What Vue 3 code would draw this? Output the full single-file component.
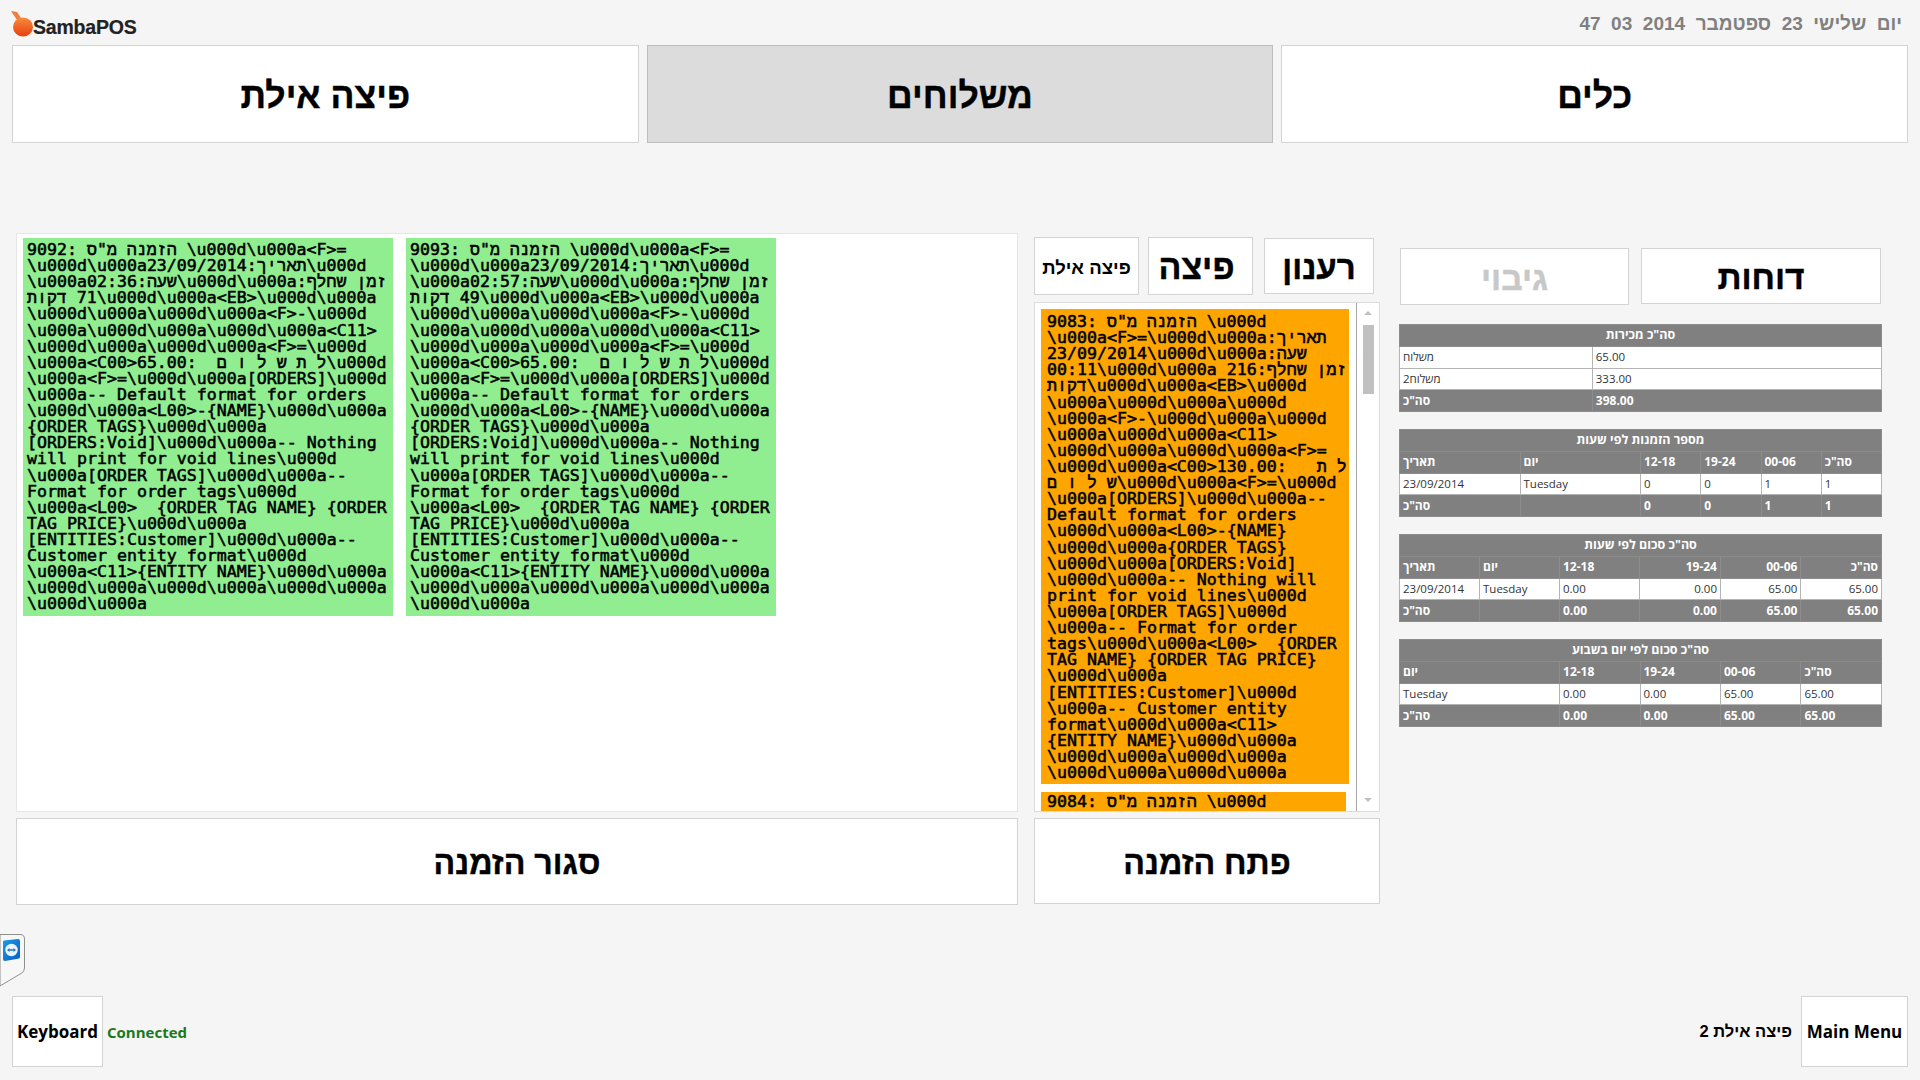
<script setup>
const L = '\u200E'
const r = String.raw
const clockText = 'יום  שלישי  23  ספטמבר  2014  03  47'
const card9092 = [
  r`9092: הזמנה מ"ס \u000d\u000a<F>=`,
  r`\u000d\u000a23/09/2014:תאריך\u000d`,
  r`\u000a02:36:שעה\u000d\u000a:זמן שחלף`,
  r`דקות${L} 71\u000d\u000a<EB>\u000d\u000a`,
  r`\u000d\u000a\u000d\u000a<F>-\u000d`,
  r`\u000a\u000d\u000a\u000d\u000a<C11>`,
  r`\u000d\u000a\u000d\u000a<F>=\u000d`,
  r`\u000a<C00>65.00:  ל ת ש ל ו ם\u000d`,
  r`\u000a<F>=\u000d\u000a[ORDERS]\u000d`,
  r`\u000a-- Default format for orders`,
  r`\u000d\u000a<L00>-{NAME}\u000d\u000a`,
  r`{ORDER TAGS}\u000d\u000a`,
  r`[ORDERS:Void]\u000d\u000a-- Nothing`,
  r`will print for void lines\u000d`,
  r`\u000a[ORDER TAGS]\u000d\u000a--`,
  r`Format for order tags\u000d`,
  r`\u000a<L00>  {ORDER TAG NAME} {ORDER`,
  r`TAG PRICE}\u000d\u000a`,
  r`[ENTITIES:Customer]\u000d\u000a--`,
  r`Customer entity format\u000d`,
  r`\u000a<C11>{ENTITY NAME}\u000d\u000a`,
  r`\u000d\u000a\u000d\u000a\u000d\u000a`,
  r`\u000d\u000a`
]
const card9093 = card9092.map((s) =>
  s.replace('9092', '9093').replace('02:36', '02:57').replace(' 71', ' 49')
)
const card9083 = [
  r`9083: הזמנה מ"ס \u000d`,
  r`\u000a<F>=\u000d\u000a:תאריך`,
  r`23/09/2014\u000d\u000a:שעה`,
  r`00:11\u000d\u000a 216:זמן שחלף`,
  r`דקות\u000d\u000a<EB>\u000d`,
  r`\u000a\u000d\u000a\u000d`,
  r`\u000a<F>-\u000d\u000a\u000d`,
  r`\u000a\u000d\u000a<C11>`,
  r`\u000d\u000a\u000d\u000a<F>=`,
  r`\u000d\u000a<C00>130.00:   ל ת`,
  r`ש ל ו ם\u000d\u000a<F>=\u000d`,
  r`\u000a[ORDERS]\u000d\u000a--`,
  r`Default format for orders`,
  r`\u000d\u000a<L00>-{NAME}`,
  r`\u000d\u000a{ORDER TAGS}`,
  r`\u000d\u000a[ORDERS:Void]`,
  r`\u000d\u000a-- Nothing will`,
  r`print for void lines\u000d`,
  r`\u000a[ORDER TAGS]\u000d`,
  r`\u000a-- Format for order`,
  r`tags\u000d\u000a<L00>  {ORDER`,
  r`TAG NAME} {ORDER TAG PRICE}`,
  r`\u000d\u000a`,
  r`[ENTITIES:Customer]\u000d`,
  r`\u000a-- Customer entity`,
  r`format\u000d\u000a<C11>`,
  r`{ENTITY NAME}\u000d\u000a`,
  r`\u000d\u000a\u000d\u000a`,
  r`\u000d\u000a\u000d\u000a`
]
const greenCards = [card9092, card9093]

const tables = [
  {
    title: 'סה"כ מכירות',
    cols: [40, 60],
    align: [],
    rows: [
      { cells: ['משלוח', '65.00'] },
      { cells: ['משלוח2', '333.00'] },
      { cells: ['סה"כ', '398.00'], dark: true }
    ]
  },
  {
    title: 'מספר הזמנות לפי שעות',
    cols: [25, 25, 12.5, 12.5, 12.5, 12.5],
    align: [],
    rows: [
      { cells: ['תאריך', 'יום', '12-18', '19-24', '00-06', 'סה"כ'], dark: true },
      { cells: ['23/09/2014', 'Tuesday', '0', '0', '1', '1'] },
      { cells: ['סה"כ', '', '0', '0', '1', '1'], dark: true }
    ]
  },
  {
    title: 'סה"כ סכום לפי שעות',
    cols: [16.6, 16.6, 16.7, 16.7, 16.7, 16.7],
    align: [0, 0, 0, 1, 1, 1],
    rows: [
      { cells: ['תאריך', 'יום', '12-18', '19-24', '00-06', 'סה"כ'], dark: true },
      { cells: ['23/09/2014', 'Tuesday', '0.00', '0.00', '65.00', '65.00'] },
      { cells: ['סה"כ', '', '0.00', '0.00', '65.00', '65.00'], dark: true }
    ]
  },
  {
    title: 'סה"כ סכום לפי יום בשבוע',
    cols: [33.2, 16.7, 16.7, 16.7, 16.7],
    align: [],
    rows: [
      { cells: ['יום', '12-18', '19-24', '00-06', 'סה"כ'], dark: true },
      { cells: ['Tuesday', '0.00', '0.00', '65.00', '65.00'] },
      { cells: ['סה"כ', '0.00', '0.00', '65.00', '65.00'], dark: true }
    ]
  }
]
</script>

<template>
  <div class="screen">
    <header class="header">
      <div class="logo">
        <svg class="logo-mark" width="23" height="26" viewBox="0 0 23 26">
          <defs>
            <linearGradient id="fruit" x1="0" y1="0" x2="0" y2="1">
              <stop offset="0" stop-color="#f78a3e" />
              <stop offset="1" stop-color="#e8400f" />
            </linearGradient>
          </defs>
          <path d="M0 0 L6 1 L10 7 L6 9 Z" fill="#ef7d3f" />
          <ellipse cx="12" cy="16" rx="10" ry="9.5" fill="url(#fruit)" />
        </svg>
        <span class="logo-text">SambaPOS</span>
      </div>
      <div class="clock" dir="rtl">{{ clockText }}</div>
    </header>

    <nav class="tabs">
      <button class="btn tab">פיצה אילת</button>
      <button class="btn tab selected">משלוחים</button>
      <button class="btn tab">כלים</button>
    </nav>

    <main class="main">
      <section class="col-left">
        <div class="ready-panel">
          <article v-for="(card, i) in greenCards" :key="i" class="ticket green">
            <div v-for="(line, j) in card" :key="j" class="ln">{{ line }}</div>
          </article>
        </div>
        <button class="btn action">סגור הזמנה</button>
      </section>

      <section class="col-mid">
        <div class="mid-buttons">
          <button class="btn mini small">פיצה אילת</button>
          <button class="btn mini pizza">פיצה</button>
          <button class="btn mini wide">רענון</button>
        </div>
        <div class="list">
          <div class="list-body">
            <article class="ticket orange">
              <div v-for="(line, j) in card9083" :key="j" class="ln">{{ line }}</div>
            </article>
            <article class="ticket orange second">
              <div class="ln">9084: הזמנה מ"ס \u000d</div>
            </article>
          </div>
          <div class="scrollbar">
            <span class="arrow up"></span>
            <span class="thumb"></span>
            <span class="arrow down"></span>
          </div>
        </div>
        <button class="btn action open">פתח הזמנה</button>
      </section>

      <section class="col-right">
        <div class="right-buttons">
          <button class="btn report disabled">גיבוי</button>
          <button class="btn report">דוחות</button>
        </div>
        <table v-for="t in tables" :key="t.title" class="report-table">
          <colgroup>
            <col v-for="(c, i) in t.cols" :key="i" :style="{ width: c + '%' }" />
          </colgroup>
          <thead>
            <tr class="dark"><th :colspan="t.cols.length">{{ t.title }}</th></tr>
          </thead>
          <tbody>
            <tr v-for="(row, i) in t.rows" :key="i" :class="{ dark: row.dark }">
              <td v-for="(cell, k) in row.cells" :key="k" :class="{ num: t.align[k] }">{{ cell }}</td>
            </tr>
          </tbody>
        </table>
      </section>
    </main>

    <footer class="footer">
      <button class="btn foot-btn">Keyboard</button>
      <span class="status">Connected</span>
      <span class="spacer"></span>
      <span class="terminal" dir="rtl">פיצה אילת 2</span>
      <button class="btn foot-btn menu">Main Menu</button>
    </footer>

    <aside class="tv-tab">
      <svg width="26" height="54" viewBox="0 0 26 54">
        <defs>
          <linearGradient id="tv" x1="0" y1="0" x2="1" y2="1">
            <stop offset="0" stop-color="#1f9ae8" />
            <stop offset="1" stop-color="#0a5cc4" />
          </linearGradient>
        </defs>
        <path d="M0 0.5 H20 Q24.5 0.5 24.5 5 V34 Q24.5 38 21 39.5 L0 52 Z" fill="#f7f7f7" stroke="#8f8f8f" />
        <path d="M4 6.5 L18 5 Q20 5 20 7 L20 23 Q20 24.5 18 24.8 L5 27 Q3 27 3 25 L3 8 Q3 6.7 4 6.5 Z" fill="url(#tv)" />
        <circle cx="11.5" cy="16" r="6.2" fill="#e8f3fc" />
        <path d="M7 16 L9.5 14 V15.3 H13.5 V14 L16 16 L13.5 18 V16.7 H9.5 V18 Z" fill="#2a78c8" />
      </svg>
    </aside>
  </div>
</template>

<style scoped>
.screen {
  position: relative;
  width: 1920px;
  height: 1080px;
  background: #f5f5f5;
  display: flex;
  flex-direction: column;
  overflow: hidden;
  font-family: "Open Sans", "Liberation Sans", sans-serif;
  color: #000;
}
.header {
  height: 45px;
  padding: 10px 18px 0 11px;
  box-sizing: border-box;
  display: flex;
  justify-content: space-between;
  align-items: flex-start;
}
.logo {
  display: flex;
  align-items: flex-end;
  height: 27px;
}
.logo-mark {
  margin-top: 1px;
}
.logo-text {
  font-family: "Liberation Sans", sans-serif;
  font-size: 19.5px;
  font-weight: 700;
  color: #222;
  letter-spacing: -0.2px;
  line-height: 20px;
  margin-left: -1px;
  -webkit-text-stroke: 0.2px #222;
}
.clock {
  font-family: "Liberation Sans", sans-serif;
  font-size: 19px;
  font-weight: 700;
  color: #808080;
  white-space: pre;
  line-height: 26px;
  margin-top: 1px;
}
.btn {
  display: flex;
  align-items: center;
  justify-content: center;
  padding: 4px 0 0;
  margin: 0;
  box-sizing: border-box;
  background: #fff;
  border: 1px solid #d3d3d3;
  color: #000;
  font-family: "Liberation Sans", sans-serif;
  font-weight: 700;
  -webkit-text-stroke: 0.4px currentColor;
}
.tabs {
  height: 98px;
  margin: 0 12px;
  display: grid;
  grid-template-columns: repeat(3, 1fr);
  gap: 8px;
}
.tab {
  font-size: 35.6px;
}
.selected {
  background: #dcdcdc;
  border-color: #bdbdbd;
}
.main {
  display: flex;
  margin-top: 90px;
  padding-left: 16px;
  height: 673px;
}
.col-left {
  width: 1002px;
  display: flex;
  flex-direction: column;
  gap: 6px;
}
.ready-panel {
  height: 579px;
  box-sizing: border-box;
  background: #fff;
  border: 1px solid #e6e6e6;
  padding: 4px 6px;
  display: flex;
  gap: 13px;
  align-items: flex-start;
}
.action {
  height: 87px;
  font-size: 32.2px;
  flex: none;
}
.ticket {
  font-family: "DejaVu Sans Mono", "Liberation Mono", monospace;
  font-weight: 400;
  -webkit-text-stroke: 0.55px #000;
  font-size: 16.6px;
  line-height: 16.12px;
  box-sizing: border-box;
}
.ln {
  white-space: pre;
  height: 16.12px;
  direction: ltr;
}
.green {
  width: 370px;
  height: 378px;
  background: #90ee90;
  padding: 4px 4px;
}
.orange {
  width: 308px;
  height: 475px;
  background: #ffa500;
  padding: 5px 6px;
  flex: none;
}
.orange.second {
  width: 305px;
  margin-top: 8px;
  height: 40px;
  padding-top: 2px;
}
.col-mid {
  width: 346px;
  margin-left: 16px;
  display: flex;
  flex-direction: column;
}
.mid-buttons {
  height: 59px;
  margin-top: 3px;
  display: flex;
  align-items: center;
  gap: 9px;
}
.mini {
  width: 105px;
  height: 58px;
  font-size: 33px;
}
.mini.pizza {
  font-size: 34px;
  padding-right: 8px;
}
.mini.small {
  font-size: 18.6px;
  -webkit-text-stroke: 0;
}
.mini.wide {
  width: 110px;
  margin-left: 2px;
  height: 56px;
}
.list {
  margin-top: 7px;
  height: 510px;
  box-sizing: border-box;
  display: flex;
  background: #fff;
  border: 1px solid #dcdcdc;
  overflow: hidden;
}
.list-body {
  flex: 1;
  min-width: 0;
  padding: 6px 0 0 6px;
  overflow: hidden;
  border-right: 1px solid #a8a8a8;
}
.scrollbar {
  width: 22px;
  flex: none;
  box-sizing: border-box;
  display: flex;
  flex-direction: column;
  align-items: center;
  position: relative;
}
.arrow {
  width: 0;
  height: 0;
  border-left: 4px solid transparent;
  border-right: 4px solid transparent;
}
.arrow.up {
  margin-top: 8px;
  border-bottom: 4px solid #c0c0c0;
}
.thumb {
  width: 11px;
  height: 69px;
  margin-top: 10px;
  background: #c0c0c0;
}
.arrow.down {
  margin-top: auto;
  margin-bottom: 9px;
  border-top: 4px solid #c0c0c0;
}
.open {
  margin-top: 6px;
  height: 86px;
}
.col-right {
  width: 483px;
  margin-left: 19px;
  display: flex;
  flex-direction: column;
}
.right-buttons {
  height: 57px;
  margin-top: 15px;
  margin-bottom: 19px;
  display: flex;
  gap: 12px;
  padding: 0 1px;
}
.report {
  font-size: 33.5px;
  height: 56px;
}
.report.disabled {
  width: 229px;
  height: 57px;
  color: #c8c8c8;
}
.report:not(.disabled) {
  width: 240px;
}
.report-table {
  width: 483px;
  height: 87px;
  table-layout: fixed;
  border-collapse: collapse;
  margin-bottom: 17px;
  font-size: 11.5px;
  background: #fff;
  color: #333;
}
.report-table th,
.report-table td {
  height: 21.75px;
  padding: 0 3px;
  box-sizing: border-box;
  line-height: 14px;
  border: 1px solid #b4b4b4;
  white-space: nowrap;
  overflow: hidden;
}
.report-table th {
  text-align: center;
  font-size: 12.5px;
}
.report-table .dark {
  background: #808080;
  color: #fff;
  font-weight: 700;
  font-size: 12px;
}
.report-table .dark th,
.report-table .dark td {
  border-color: #8c8c8c;
}
.num {
  text-align: right;
}
.footer {
  position: absolute;
  left: 12px;
  right: 12px;
  bottom: 13px;
  height: 71px;
  display: flex;
  align-items: center;
}
.foot-btn {
  width: 91px;
  height: 71px;
  padding: 0;
  font-family: "Open Sans", "Liberation Sans", sans-serif;
  font-size: 17px;
  font-weight: 700;
  -webkit-text-stroke: 0;
}
.foot-btn.menu {
  width: 107px;
  margin-left: 9px;
}
.status {
  margin-left: 4px;
  font-size: 15px;
  font-weight: 700;
  color: #1a7a1a;
}
.spacer {
  flex: 1;
}
.terminal {
  font-family: "Liberation Sans", sans-serif;
  font-size: 16.5px;
  font-weight: 700;
}
.tv-tab {
  position: absolute;
  left: 0;
  top: 934px;
  width: 26px;
  height: 54px;
}
.tv-tab svg {
  display: block;
}
</style>

<style>
html, body {
  margin: 0;
  background: #f5f5f5;
}
</style>
